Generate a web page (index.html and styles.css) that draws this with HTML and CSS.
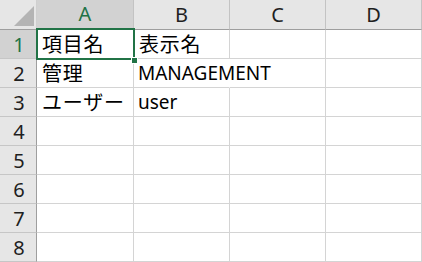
FILE: index.html
```html
<!DOCTYPE html>
<html lang="ja">
<head>
    <meta charset="UTF-8">
    <title>Sheet1</title>
    <link rel="stylesheet" href="styles.css">
</head>
<body>
    <div class="sheet">
        <!-- column headers -->
        <div class="corner"><span class="corner-tri"></span></div>
        <div class="col-head selected">A</div>
        <div class="col-head">B</div>
        <div class="col-head">C</div>
        <div class="col-head">D</div>

        <div class="row-head selected">1</div>
        <div class="cell ja">項目名</div>
        <div class="cell ja">表示名</div>
        <div class="cell"></div>
        <div class="cell"></div>

        <div class="row-head">2</div>
        <div class="cell ja">管理</div>
        <div class="cell overflow">MANAGEMENT</div>
        <div class="cell"></div>
        <div class="cell"></div>

        <div class="row-head">3</div>
        <div class="cell ja">ユーザー</div>
        <div class="cell">user</div>
        <div class="cell"></div>
        <div class="cell"></div>

        <div class="row-head">4</div>
        <div class="cell"></div>
        <div class="cell"></div>
        <div class="cell"></div>
        <div class="cell"></div>

        <div class="row-head">5</div>
        <div class="cell"></div>
        <div class="cell"></div>
        <div class="cell"></div>
        <div class="cell"></div>

        <div class="row-head">6</div>
        <div class="cell"></div>
        <div class="cell"></div>
        <div class="cell"></div>
        <div class="cell"></div>

        <div class="row-head">7</div>
        <div class="cell"></div>
        <div class="cell"></div>
        <div class="cell"></div>
        <div class="cell"></div>

        <div class="row-head">8</div>
        <div class="cell"></div>
        <div class="cell"></div>
        <div class="cell"></div>
        <div class="cell"></div>

        <div class="row-head"></div>
        <div class="cell"></div>
        <div class="cell"></div>
        <div class="cell"></div>
        <div class="cell"></div>

        <!-- active cell A1 -->
        <div class="selection"><span class="fill-handle"></span></div>
    </div>
</body>
</html>
```

FILE: styles.css
```css
html, body {
    margin: 0;
    padding: 0;
    background: #fff;
}
body {
    font-family: "Noto Sans", "Noto Sans CJK JP", sans-serif;
    font-size: 20px;
    color: #000;
    overflow: hidden;
}
.sheet {
    position: relative;
    width: 422px;
    height: 262px;
    display: grid;
    grid-template-columns: 37px 97px 96px 96px 1fr;
    grid-template-rows: 30px repeat(8, 29px) 1fr;
    overflow: hidden;
}
.sheet > div {
    box-sizing: border-box;
}
.corner {
    position: relative;
    background: #e6e6e6;
    border-right: 1px solid #cfcfcf;
    border-bottom: 1px solid #9e9e9e;
}
.corner-tri {
    position: absolute;
    right: 2px;
    bottom: 3px;
    width: 0;
    height: 0;
    border-left: 20px solid transparent;
    border-bottom: 20px solid #b4b4b4;
}
.col-head {
    background: #e6e6e6;
    border-right: 1px solid #c3c3c3;
    border-bottom: 1px solid #9e9e9e;
    color: #1f1f1f;
    display: flex;
    align-items: center;
    justify-content: center;
    padding-bottom: 1px;
}
.row-head {
    background: #e6e6e6;
    border-right: 1px solid #9e9e9e;
    border-bottom: 1px solid #c6c6c6;
    color: #1f1f1f;
    display: flex;
    align-items: center;
    justify-content: center;
    padding-left: 2px;
}
.col-head.selected,
.row-head.selected {
    background: #d2d2d2;
    color: #217346;
}
.col-head.selected {
    border-bottom: 2px solid #217346;
}
.cell {
    border-right: 1px solid #d4d4d4;
    border-bottom: 1px solid #d4d4d4;
    padding: 1px 0 0 4px;
    line-height: 27px;
    white-space: nowrap;
    font-size: 19px;
}
.cell.ja {
    font-size: 20px;
    letter-spacing: 0.8px;
    padding-left: 5px;
}
.cell.overflow {
    overflow: visible;
    position: relative;
    z-index: 1;
    border-right-color: transparent;
}
.selection {
    position: absolute;
    left: 36px;
    top: 28px;
    width: 99px;
    height: 32px;
    box-sizing: border-box;
    border: 2px solid #217346;
    z-index: 2;
}
.fill-handle {
    position: absolute;
    right: -4px;
    bottom: -5px;
    width: 5px;
    height: 5px;
    background: #217346;
    box-shadow: 0 0 0 1px #fff;
}
```
